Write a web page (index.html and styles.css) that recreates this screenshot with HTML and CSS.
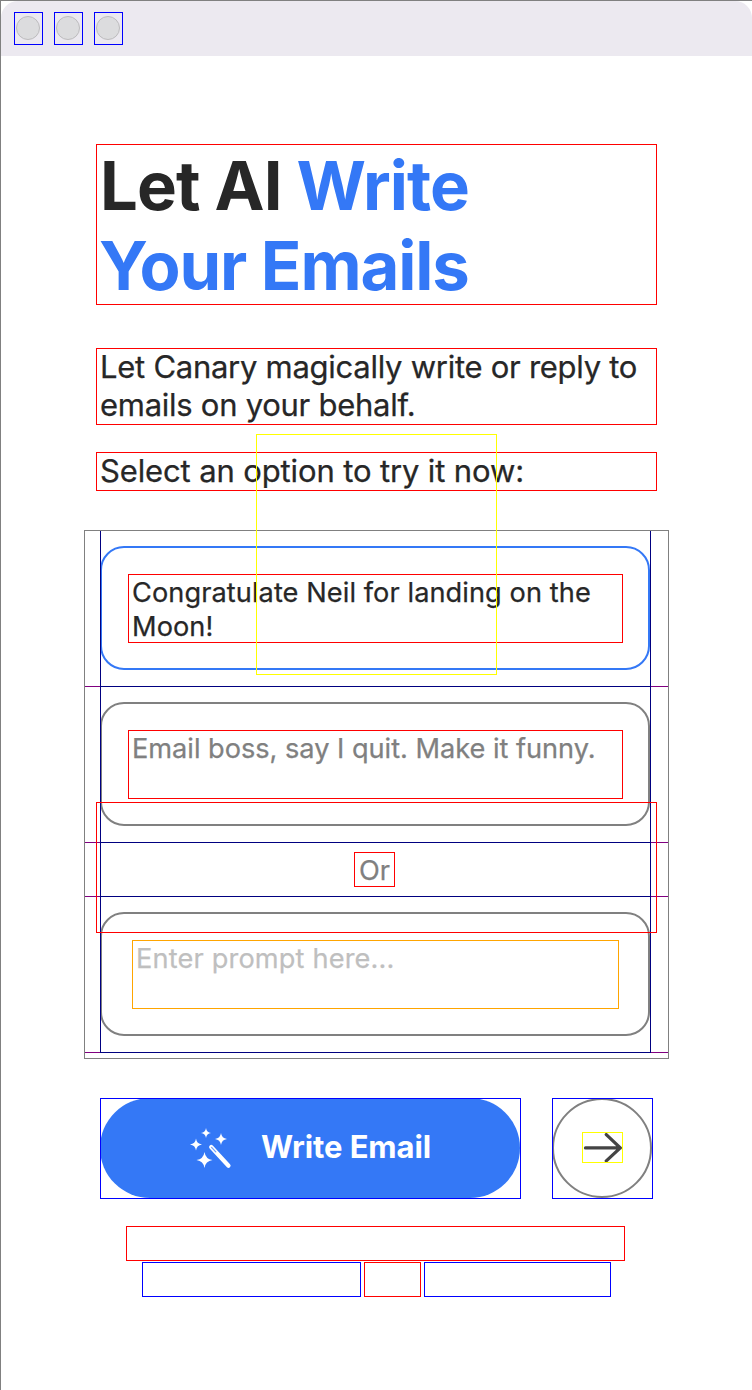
FILE: index.html
```html
<!DOCTYPE html>
<html lang="en">
<head>
<meta charset="utf-8">
<title>Let AI Write Your Emails</title>
<link rel="stylesheet" href="styles.css">
</head>
<body>
<div class="window">
  <header class="titlebar">
    <span class="light"><i></i></span>
    <span class="light"><i></i></span>
    <span class="light"><i></i></span>
  </header>
  <main class="content">
    <h1 class="title label">Let AI <em>Write<br><span class="tight">Your Emails</span></em></h1>
    <p class="lead label">Let Canary magically write or reply to<br>emails on your behalf.</p>
    <p class="hint label">Select an option to try it now:</p>
    <section class="options">
      <div class="row">
        <div class="option selected"><p class="label first">Congratulate Neil for landing on the<br>Moon!</p></div>
      </div>
      <div class="row">
        <div class="option"><p class="label second">Email boss, say I quit. Make it funny.</p></div>
      </div>
      <div class="row divider"><span class="label or">Or</span></div>
      <div class="row">
        <div class="option"><p class="field">Enter prompt here...</p></div>
      </div>
      <div class="column-guides"></div>
    </section>
    <div class="actions">
      <div class="control write">
        <div class="pill">
          <svg class="wand" width="42" height="42" viewBox="0 0 42 42" fill="#fff">
            <path d="M16 0Q16.600 4.400 21 5Q16.600 5.600 16 10Q15.400 5.600 11 5Q15.400 4.400 16 0Z"/>
            <path d="M31 5Q31.700 10.300 37 11Q31.700 11.700 31 17Q30.300 11.700 25 11Q30.300 10.300 31 5Z"/>
            <path d="M6 10.500Q6.700 15.800 12 16.500Q6.700 17.200 6 22.500Q5.300 17.200 0 16.500Q5.300 15.800 6 10.500Z"/>
            <path d="M14.500 24Q15.500 31 22.500 32Q15.500 33 14.500 40Q13.500 33 6.500 32Q13.500 31 14.500 24Z"/>
            <path d="M21.200 19L38.500 37.700" fill="none" stroke="#fff" stroke-width="4.200" stroke-linecap="round"/>
            <path d="M21.600 19.400L25.800 23.900" fill="none" stroke="#3478f6" stroke-opacity="0.700" stroke-width="1.200" stroke-linecap="round"/>
          </svg>
          <span class="caption">Write Email</span>
        </div>
      </div>
      <div class="control next">
        <div class="circle">
          <svg class="arrow" width="41" height="31" viewBox="0 0 41 31" fill="none" stroke="#444" stroke-width="3.300" stroke-linecap="round" stroke-linejoin="round">
            <path d="M3.500 15.900H38.300M24.300 2.600L38.300 15.900L24.300 28.900"/>
          </svg>
        </div>
      </div>
    </div>
    <div class="empty-label label"></div>
    <div class="links">
      <div class="link terms"></div>
      <div class="label and"></div>
      <div class="link privacy"></div>
    </div>
  </main>
  <div class="overlay image-bounds"></div>
  <div class="overlay text-bounds"></div>
</div>
</body>
</html>
```
FILE: styles.css
```css
* { box-sizing: border-box; }
body { margin: 0; background: #fff; font-family: Inter, "Liberation Sans", sans-serif; color: #272727; }
h1, p { margin: 0; font-weight: 400; }
.window { position: relative; width: 752px; height: 1390px; overflow: hidden; border: 1px solid #808080; border-right: 0; border-bottom: 0; }
.titlebar { display: flex; gap: 11px; height: 55px; padding: 11px 0 0 13px; background: #ece9f0; border-radius: 17px 17px 0 0; }
.light { display: flex; width: 29px; height: 33px; padding: 3px 1px; border: 1px solid #00f; }
.light i { width: 24px; height: 24px; border: 1px solid #bdbcbe; border-radius: 50%; background: #dcdcde; }
.content { display: flex; flex-direction: column; padding: 88px 0 0 95px; }
.label { outline: 1px solid #f00; outline-offset: -1px; white-space: nowrap; }
.title { width: 561px; height: 161px; padding: 2px 0 0 4px; font-size: 67px; line-height: 80px; font-weight: 700; letter-spacing: -0.9px; }
.title em { font-style: normal; color: #3478f6; }
.tight { letter-spacing: -1.150px; margin-left: -1px; }
.lead, .hint { width: 561px; padding-left: 4px; font-size: 31px; line-height: 38px; -webkit-text-stroke: 0.250px; }
.lead { height: 77px; margin-top: 43px; letter-spacing: -0.270px; }
.hint { height: 39px; margin-top: 27px; letter-spacing: -0.130px; }
.options { position: relative; display: flex; flex-direction: column; width: 585px; height: 529px; margin: 39px 0 0 -12px; border: 1px solid #808080; }
.row { display: flex; flex: none; height: 156px; padding: 15px 0 0 15px; border-bottom: 1px solid #800080; }
.divider { height: 54px; padding: 9px 0 0 269px; }
.option { width: 550px; height: 124px; padding: 26px; border: 2px solid #808080; border-radius: 24px; color: #808080; }
.selected { border-color: #3478f6; color: #272727; }
.option .label { width: 495px; height: 69px; padding: 2px 0 0 4px; }
.option, .or { font-size: 27.200px; line-height: 34px; -webkit-text-stroke: 0.250px; }
.option .first { letter-spacing: 0.070px; }
.option .second { letter-spacing: -0.030px; }
.or { width: 41px; height: 35px; padding: 2px 0 0 5px; color: #808080; }
.option .field { width: 487px; height: 69px; margin-left: 4px; padding: 2px 0 0 4px; outline: 1px solid #ffa500; outline-offset: -1px; color: #bfbfbf; letter-spacing: 0.150px; }
.column-guides { position: absolute; left: 15px; top: 0; width: 551px; height: 522px; border: solid #000080; border-width: 0 1px 1px; background: linear-gradient(#000080, #000080) 0 155px / 100% 1px no-repeat, linear-gradient(#000080, #000080) 0 311px / 100% 1px no-repeat, linear-gradient(#000080, #000080) 0 365px / 100% 1px no-repeat; }
.actions { display: flex; margin: 39px 0 0 4px; }
.control { height: 101px; outline: 1px solid #00f; outline-offset: -1px; }
.write { width: 421px; }
.next { width: 101px; margin-left: 31px; }
.pill { display: flex; align-items: flex-start; width: 420px; height: 100px; padding: 30px 0 0 89.500px; border-radius: 50px; background: #3478f6; color: #fff; }
.wand { flex: none; display: block; margin-right: 29.500px; }
.caption { font-size: 31px; line-height: 38px; font-weight: 700; letter-spacing: -0.100px; white-space: nowrap; }
.circle { width: 100px; height: 100px; padding: 32px 0 0 28px; border: 2px solid #808080; border-radius: 50%; }
.arrow { display: block; outline: 1px solid #ff0; outline-offset: -1px; }
.empty-label { width: 499px; height: 35px; margin: 27px 0 0 30px; }
.links { display: flex; gap: 3px; margin: 1px 0 0 46px; }
.link { height: 35px; border: 1px solid #00f; }
.terms { width: 219px; }
.privacy { width: 187px; }
.and { width: 57px; height: 35px; }
.overlay { position: absolute; border: 1px solid; }
.image-bounds { left: 255px; top: 433px; width: 241px; height: 241px; border-color: #ff0; }
.text-bounds { left: 95px; top: 801px; width: 561px; height: 131px; border-color: #f00; }
```
